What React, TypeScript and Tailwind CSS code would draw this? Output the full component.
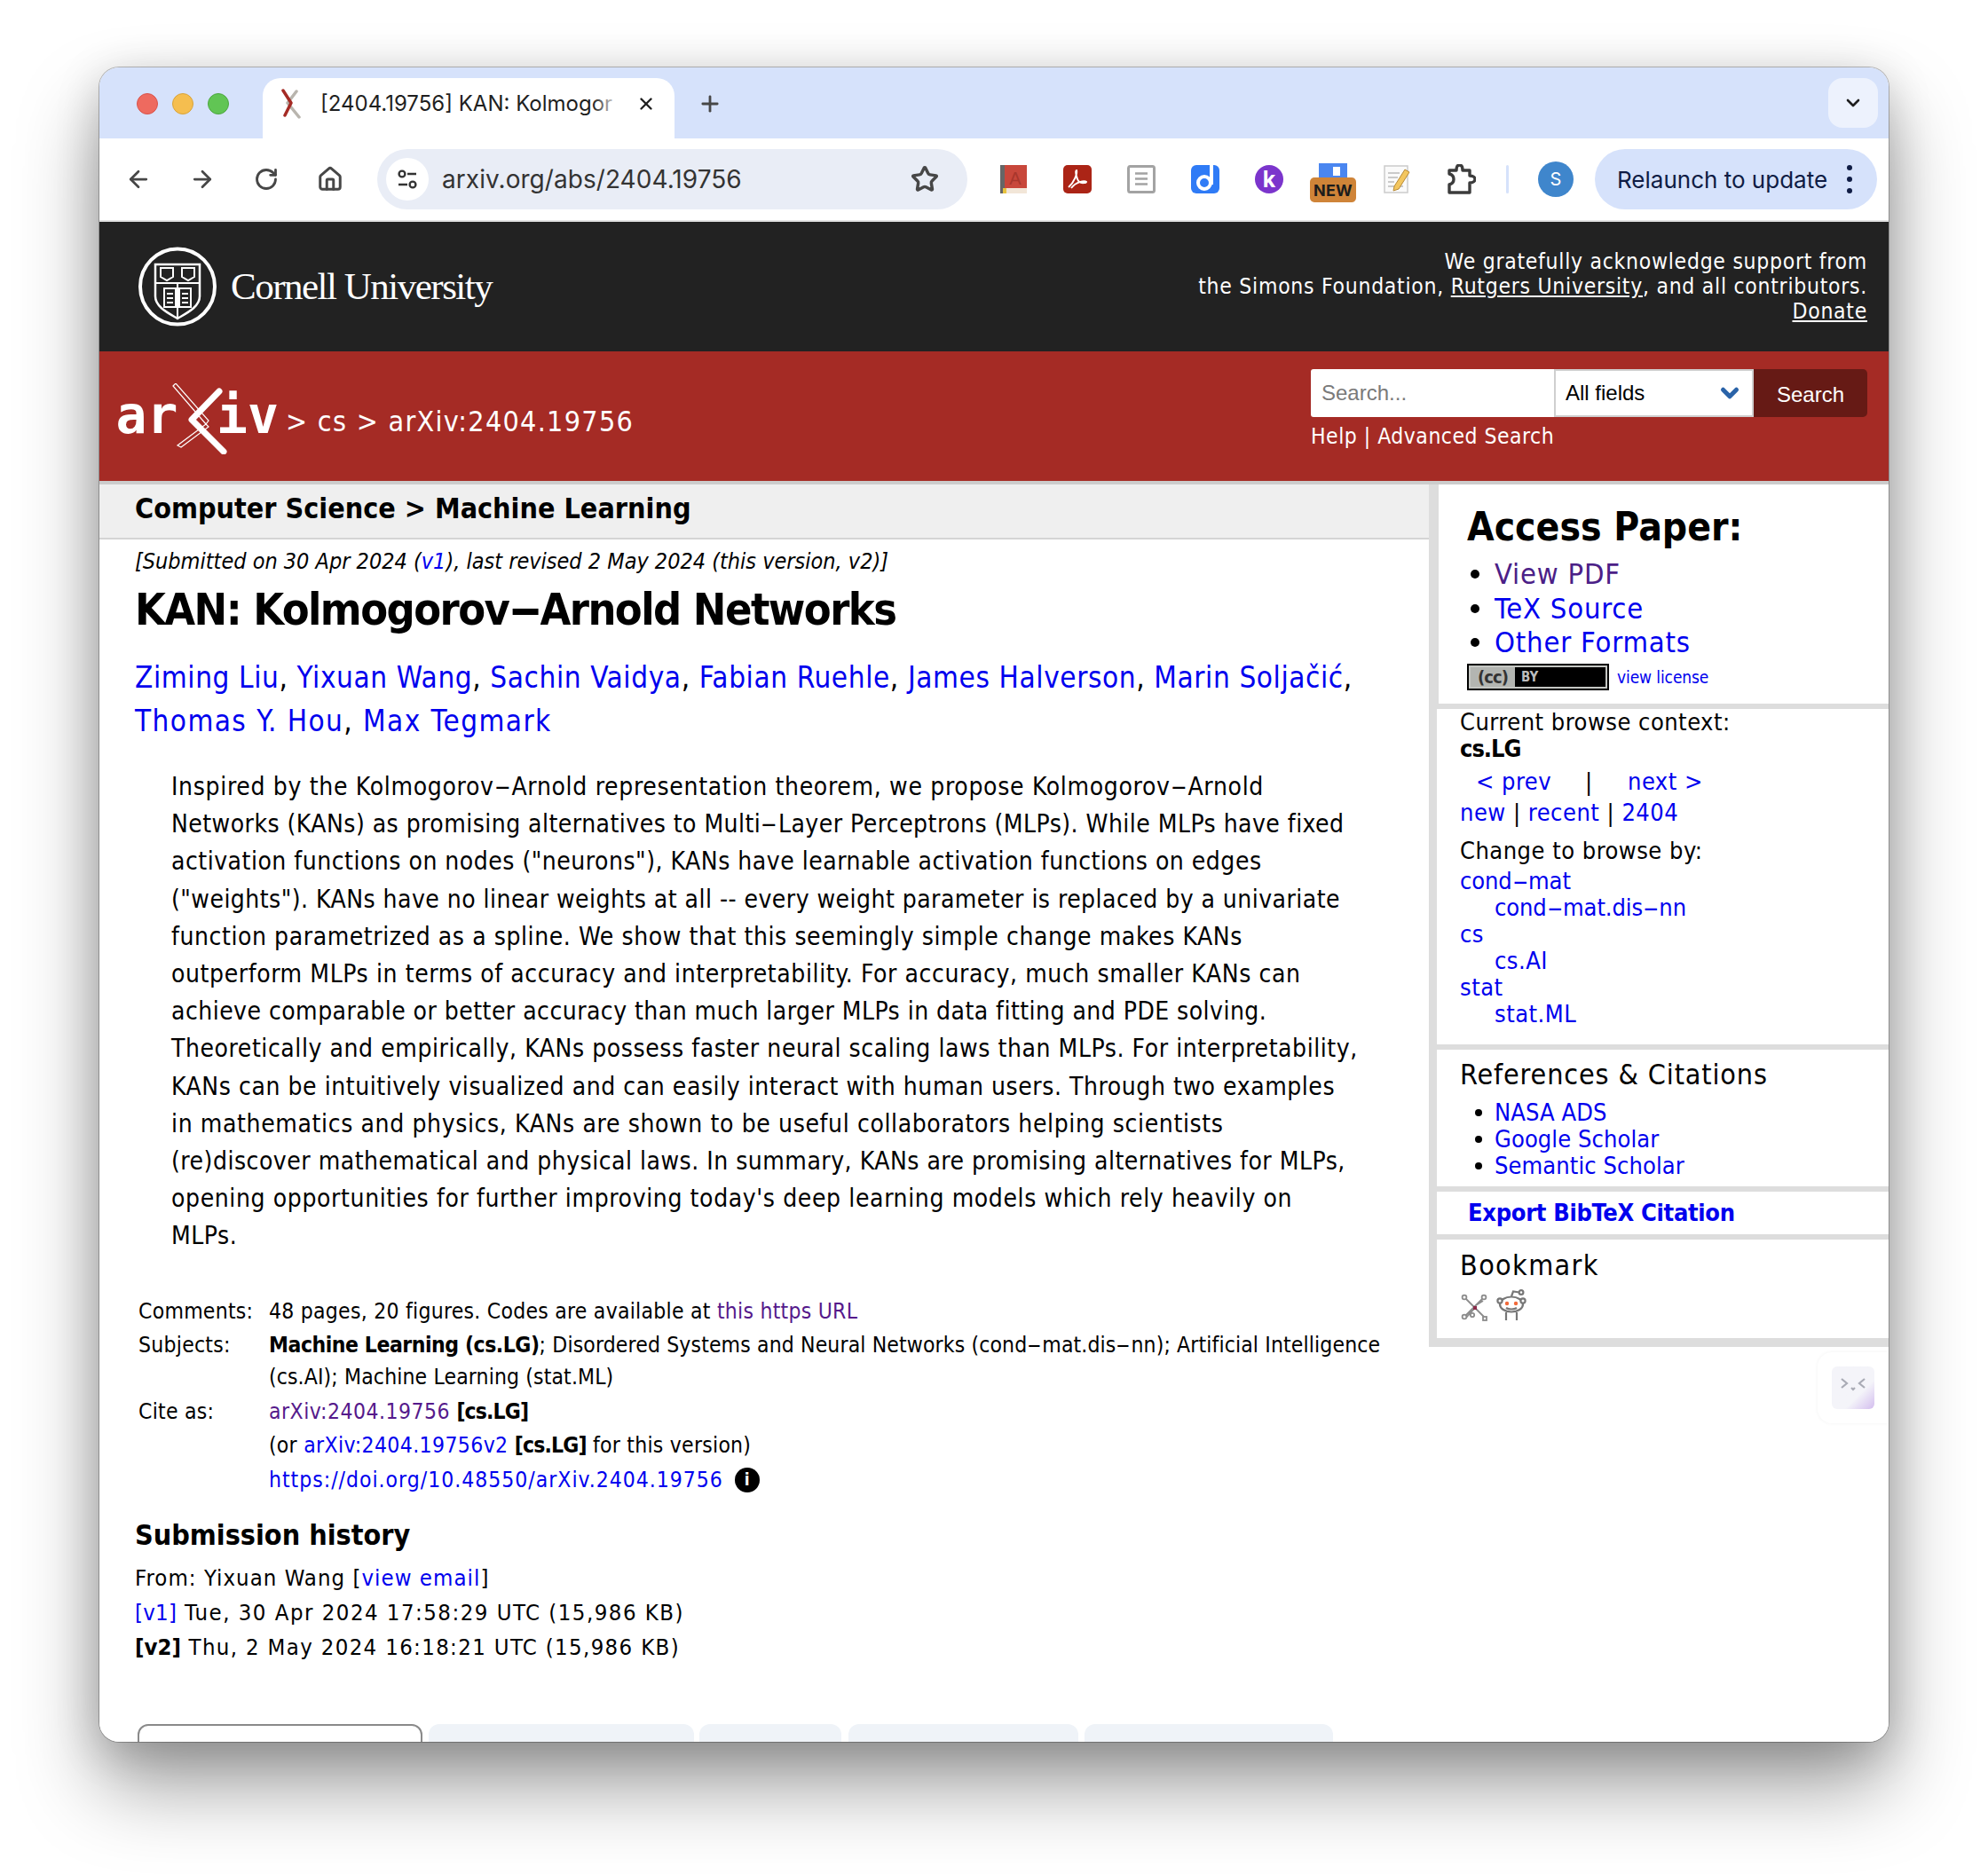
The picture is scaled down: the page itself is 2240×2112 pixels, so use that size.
import React from "react";
import { ArrowLeft, ArrowRight, RotateCw, Star, Plus, X, ChevronDown, House } from "lucide-react";

const abstractLines = [
  { text: "Inspired by the Kolmogorov-Arnold representation theorem, we propose Kolmogorov-Arnold", fit: "tracking-[0.68px]" },
  { text: "Networks (KANs) as promising alternatives to Multi-Layer Perceptrons (MLPs). While MLPs have fixed", fit: "tracking-[0.47px]" },
  { text: 'activation functions on nodes ("neurons"), KANs have learnable activation functions on edges', fit: "tracking-[0.51px]" },
  { text: '("weights"). KANs have no linear weights at all -- every weight parameter is replaced by a univariate', fit: "tracking-[0.47px]" },
  { text: "function parametrized as a spline. We show that this seemingly simple change makes KANs", fit: "tracking-[0.58px]" },
  { text: "outperform MLPs in terms of accuracy and interpretability. For accuracy, much smaller KANs can", fit: "tracking-[0.6px]" },
  { text: "achieve comparable or better accuracy than much larger MLPs in data fitting and PDE solving.", fit: "tracking-[0.47px]" },
  { text: "Theoretically and empirically, KANs possess faster neural scaling laws than MLPs. For interpretability,", fit: "tracking-[0.57px]" },
  { text: "KANs can be intuitively visualized and can easily interact with human users. Through two examples", fit: "tracking-[0.56px]" },
  { text: "in mathematics and physics, KANs are shown to be useful collaborators helping scientists", fit: "tracking-[0.63px]" },
  { text: "(re)discover mathematical and physical laws. In summary, KANs are promising alternatives for MLPs,", fit: "tracking-[0.51px]" },
  { text: "opening opportunities for further improving today's deep learning models which rely heavily on", fit: "tracking-[0.62px]" },
  { text: "MLPs.", fit: "tracking-[0.53px]" },
];

function Link({ children, className = "" }: { children: React.ReactNode; className?: string }) {
  return <a className={"text-[#0000ee] " + className}>{children}</a>;
}

function Hy({ text }: { text: string }) {
  const parts = text.split(/(?<!-)-(?!-)/);
  return (
    <>
      {parts.map((part, i) => (
        <React.Fragment key={i}>
          {i > 0 && <span className="inline-block scale-x-[2.1] px-[0.18em]">-</span>}
          {part}
        </React.Fragment>
      ))}
    </>
  );
}

function ArxivLogo() {
  return (
    <svg width="186" height="80" viewBox="0 0 186 80" className="-mr-[6px] shrink-0">
      <text x="-0.5" y="56" fill="#fff" fontFamily="'DejaVu Sans Mono', monospace" fontWeight="700" fontSize="58">ar</text>
      <text x="113" y="56" fill="#fff" fontFamily="'DejaVu Sans Mono', monospace" fontWeight="700" fontSize="58">iv</text>
      <path d="M116 9 L85 41 L121 77" fill="none" stroke="#fff" strokeWidth="7" strokeLinecap="round" strokeLinejoin="round" />
      <path d="M64 3 L67 0 L104 42 L101 46 Z M101 46 L104 49 L73 72 L69 70 Z" fill="none" stroke="#fff" strokeWidth="1.2" />
    </svg>
  );
}

function CornellSeal() {
  return (
    <svg width="90" height="90" viewBox="0 0 90 90" className="shrink-0" fill="none" stroke="#fff">
      <ellipse cx="45" cy="45" rx="42" ry="42.5" strokeWidth="4" />
      <path d="M20 20 H70 V56 C70 68 55 75 45 81 C35 75 20 68 20 56 Z" strokeWidth="2.5" />
      <path d="M20 41 H70 M45 41 V81" strokeWidth="2" />
      <path d="M26 24 H40 V34 L33 38 L26 34 Z M50 24 H64 V34 L57 38 L50 34 Z" strokeWidth="2" />
      <path d="M30 47 H43 V68 H30 Z M47 47 H60 V68 H47 Z" strokeWidth="2" />
      <path d="M33 53 H40 M33 58 H40 M33 63 H40 M50 53 H57 M50 58 H57 M50 63 H57" strokeWidth="1.8" />
    </svg>
  );
}

function Favicon() {
  return (
    <svg width="24" height="34" viewBox="0 0 24 34" className="shrink-0">
      <path d="M18 3 L8 16 L21 32" stroke="#b9b5ae" strokeWidth="3.5" strokeLinecap="round" strokeLinejoin="round" fill="none" />
      <path d="M3 2 L12 16 L5 30" stroke="#a52b25" strokeWidth="3.5" strokeLinecap="round" strokeLinejoin="round" fill="none" />
    </svg>
  );
}

function NavButton({ children }: { children: React.ReactNode }) {
  return <div className="flex h-[72px] w-[72px] shrink-0 items-center justify-center text-[#474747]">{children}</div>;
}

function ExtSlot({ children }: { children: React.ReactNode }) {
  return <div className="relative flex h-[72px] w-[72px] shrink-0 items-center justify-center">{children}</div>;
}

function BrowserChrome() {
  return (
    <div className="[font-family:Inter,'Liberation_Sans',sans-serif]">
      <div className="flex h-[80px] items-end bg-[#d6e2fb]">
        <div className="flex h-[68px] w-[184px] shrink-0 items-start gap-[16px] pl-[42px] pt-[17px]">
          <span className="h-[24px] w-[24px] rounded-full border border-[#d9534a] bg-[#ee6a5f]" />
          <span className="h-[24px] w-[24px] rounded-full border border-[#d8a33a] bg-[#f5be4f]" />
          <span className="h-[24px] w-[24px] rounded-full border border-[#4da63f] bg-[#61c554]" />
        </div>
        <div className="relative flex h-[68px] w-[464px] shrink-0 items-center rounded-t-[20px] bg-white pb-[10px] pl-[20px]">
          <Favicon />
          <span className="ml-[21px] text-[24px] whitespace-nowrap text-[#1f1f1f]">[2404.19756] KAN: Kolmogor</span>
          <div className="absolute top-0 left-[372px] h-full w-[30px] bg-gradient-to-r from-transparent to-white" />
          <X size={22} strokeWidth={2.6} className="absolute top-[18px] left-[421px] text-[#1f1f1f]" />
        </div>
        <div className="flex h-[68px] w-[80px] items-center justify-center pb-[10px] text-[#474747]">
          <Plus size={28} strokeWidth={2.4} />
        </div>
        <div className="flex-1" />
        <div className="mr-[12px] mb-[12px] flex h-[56px] w-[56px] items-center justify-center rounded-[16px] bg-[#edf2fd] text-[#1f1f1f]">
          <ChevronDown size={24} strokeWidth={2.6} />
        </div>
      </div>
      <div className="flex h-[92px] items-center bg-white pl-[8px]">
        <NavButton><ArrowLeft size={30} strokeWidth={2.2} /></NavButton>
        <NavButton><ArrowRight size={30} strokeWidth={2.2} /></NavButton>
        <NavButton><RotateCw size={28} strokeWidth={2.4} /></NavButton>
        <NavButton><House size={30} strokeWidth={2.4} /></NavButton>
        <div className="ml-[17px] flex h-[68px] w-[665px] shrink-0 items-center rounded-full bg-[#e9edf6] pl-[10px]">
          <div className="flex h-[48px] w-[48px] items-center justify-center rounded-full bg-white">
            <svg width="26" height="26" viewBox="0 0 26 26" fill="none" stroke="#333" strokeWidth="2.4">
              <circle cx="7" cy="7" r="3.4" />
              <path d="M13 7 H23 M3 19 H13" />
              <circle cx="19" cy="19" r="3.4" />
            </svg>
          </div>
          <span className="ml-[15px] text-[28px] tracking-[0.05px] text-[#333]">arxiv.org/abs/2404.19756</span>
          <div className="flex-1" />
          <Star size={32} strokeWidth={2.6} className="mr-[32px] text-[#474747]" />
        </div>
        <div className="ml-[16px] flex">
          <ExtSlot>
            <svg width="30" height="32" viewBox="0 0 30 32">
              <rect x="0" y="0" width="30" height="28" fill="#c8473b" />
              <rect x="0" y="0" width="5" height="32" fill="#666" />
              <rect x="5" y="26" width="25" height="6" fill="#f2e6d8" />
              <rect x="3" y="26" width="4" height="6" fill="#e8c33e" />
              <text x="17" y="22" textAnchor="middle" fontSize="20" fill="#a9362c" fontFamily="'Liberation Sans', sans-serif">A</text>
            </svg>
          </ExtSlot>
          <ExtSlot>
            <svg width="32" height="32" viewBox="0 0 32 32">
              <rect width="32" height="32" rx="5" fill="#ab2416" />
              <path d="M6 25 C12 20 16 10 15 6 C13 6 15 16 18 19 C21 21 26 20 26 19 C24 17 14 19 9 26" fill="none" stroke="#fff" strokeWidth="2" />
            </svg>
          </ExtSlot>
          <ExtSlot>
            <svg width="32" height="32" viewBox="0 0 32 32" fill="none">
              <rect x="1.5" y="1.5" width="29" height="29" rx="2" stroke="#a3a3a3" strokeWidth="3" />
              <path d="M9 9.5 H23 M9 15.5 H23 M9 21.5 H23" stroke="#a3a3a3" strokeWidth="2.6" />
            </svg>
          </ExtSlot>
          <ExtSlot>
            <svg width="32" height="32" viewBox="0 0 32 32">
              <rect width="32" height="32" rx="6" fill="#2f7bf6" />
              <rect x="21" y="0" width="4" height="22" fill="#fff" />
              <circle cx="15" cy="20" r="7" fill="none" stroke="#fff" strokeWidth="4" />
            </svg>
          </ExtSlot>
          <ExtSlot>
            <div className="flex h-[32px] w-[32px] items-center justify-center rounded-full bg-[#7b35cc] text-[25px] leading-none font-bold text-white">k</div>
          </ExtSlot>
          <ExtSlot>
            <div className="absolute top-[18px] left-[20px] h-[24px] w-[32px] bg-[#4a86f0]">
              <div className="mt-[4px] ml-[16px] h-[10px] w-[8px] bg-white" />
            </div>
            <div className="absolute top-[34px] left-[10px] flex h-[28px] w-[52px] items-center justify-center rounded-[5px] bg-[#cf8438] text-[18px] font-bold tracking-[0.2px] text-[#1c1c1c]">NEW</div>
          </ExtSlot>
          <ExtSlot>
            <svg width="30" height="32" viewBox="0 0 30 32">
              <rect x="1" y="1" width="26" height="30" fill="#fafafa" stroke="#ccc" strokeWidth="1.5" />
              <path d="M5 9 H18 M5 14 H16 M5 19 H12 M5 24 H22" stroke="#bbb" strokeWidth="1.6" />
              <path d="M12 24 L24 5 L29 8 L17 27 L11 29 Z" fill="#f3c65f" stroke="#b88a36" strokeWidth="1" />
            </svg>
          </ExtSlot>
          <ExtSlot>
            <svg width="34" height="34" viewBox="0 0 34 34" fill="none">
              <path d="M4 7 H12 C12 3 13 1 15.5 1 C18 1 19 3 19 7 H27 V13 C31 13 33 15 33 17 C33 19 31 21 27 21 V32 H4 V23 C8 22 9 20 9 17 C9 14 8 12 4 11 Z" stroke="#3c3c3c" strokeWidth="3.4" strokeLinejoin="round" />
            </svg>
          </ExtSlot>
        </div>
        <div className="ml-[15px] h-[32px] w-[3px] shrink-0 rounded bg-[#d6e2fb]" />
        <div className="ml-[33px] flex h-[40px] w-[40px] shrink-0 items-center justify-center rounded-full bg-[#3f86cc] text-[20px] text-white">S</div>
        <div className="ml-[24px] flex h-[68px] w-[318px] shrink-0 items-center rounded-full bg-[#d6e2fb] pl-[25px]">
          <span className="text-[26px] whitespace-nowrap text-[#0f1c44]">Relaunch to update</span>
          <div className="ml-[22px] flex flex-col gap-[7px]">
            <span className="h-[6px] w-[6px] rounded-full bg-[#0f1c44]" />
            <span className="h-[6px] w-[6px] rounded-full bg-[#0f1c44]" />
            <span className="h-[6px] w-[6px] rounded-full bg-[#0f1c44]" />
          </div>
        </div>
      </div>
      <div className="h-[2px] bg-[#e3e3e3]" />
    </div>
  );
}

function SiteHeader() {
  return (
    <div className="[font-family:'DejaVu_Sans',sans-serif] [font-stretch:condensed]">
      <div className="flex h-[146px] items-center justify-between bg-[#222222] pr-[24px] pl-[43px] text-white">
        <div className="flex items-center">
          <CornellSeal />
          <span className="ml-[15px] text-[43px] tracking-[-1.5px] [font-family:'Liberation_Serif',serif]">Cornell University</span>
        </div>
        <div className="text-right text-[24.5px] leading-[28px] tracking-[0.73px]">
          <div>We gratefully acknowledge support from</div>
          <div>the Simons Foundation, <span className="underline">Rutgers University</span>, and all contributors.</div>
          <div className="underline">Donate</div>
        </div>
      </div>
      <div className="flex h-[146px] items-center justify-between bg-[#a52b25] pr-[24px] pl-[19px] text-white">
        <div className="flex items-center pt-[7px]">
          <div className="-mt-[2px]"><ArxivLogo /></div>
          <span className="mt-[4px] ml-[11px] text-[32px] tracking-[1.28px] whitespace-pre">{"> cs > arXiv:2404.19756"}</span>
        </div>
        <div className="w-[627px] pb-[12px]">
          <div className="flex h-[54px]">
            <input
              readOnly
              placeholder="Search..."
              className="h-full w-[274px] rounded-l-[3px] bg-white px-[12px] text-[24px] outline-none placeholder:text-[#7a7a7a] [font-family:'Liberation_Sans',sans-serif]"
            />
            <div className="flex h-full w-[225px] items-center justify-between border-2 border-[#cfcfcf] bg-white pr-[10px] pl-[11px] text-[24px] text-black [font-family:'Liberation_Sans',sans-serif]">
              <span>All fields</span>
              <ChevronDown size={30} strokeWidth={4} className="text-[#2a63a8]" />
            </div>
            <div className="flex h-full w-[128px] items-center justify-center rounded-r-[5px] bg-[#661a15] pt-[4px] text-[24px] text-white [font-family:'Liberation_Sans',sans-serif]">Search</div>
          </div>
          <div className="mt-[4px] text-[24.5px] leading-[36px] tracking-[0.5px]">Help | Advanced Search</div>
        </div>
      </div>
      <div className="h-[4px] bg-[#cccccc]" />
    </div>
  );
}

function Bullet({ className }: { className: string }) {
  return <span className={"rounded-full bg-black " + className} />;
}

function Bold({ children }: { children: React.ReactNode }) {
  return <b className="tracking-[-0.85px]">{children}</b>;
}

function MainColumn() {
  return (
    <div className="w-[1498px] shrink-0 text-black">
      <div className="h-[62px] border-b-2 border-[#d4d4d4] bg-[#efefef] pl-[40px] text-[32px] leading-[54px] font-bold">
        Computer Science &gt; Machine Learning
      </div>
      <div className="pr-[40px] pl-[40px]">
        <div className="mt-[7px] text-[25px] leading-[36px] italic">
          [Submitted on 30 Apr 2024 (<Link>v1</Link>), last revised 2 May 2024 (this version, v2)]
        </div>
        <h1 className="mt-[6px] text-[50px] leading-[60px] font-bold tracking-[-1.55px]"><Hy text="KAN: Kolmogorov-Arnold Networks" /></h1>
        <div className="mt-[22px] text-[33px] leading-[49px] tracking-[0.6px]">
          <div>
            <Link>Ziming Liu</Link>, <Link>Yixuan Wang</Link>, <Link>Sachin Vaidya</Link>, <Link>Fabian Ruehle</Link>, <Link>James Halverson</Link>, <Link>Marin Soljačić</Link>,
          </div>
          <div className="tracking-[1.43px]">
            <Link>Thomas Y. Hou</Link>, <Link>Max Tegmark</Link>
          </div>
        </div>
        <div className="mt-[29px] pl-[41px] text-[28px] leading-[42.2px] whitespace-nowrap">
          {abstractLines.map((line) => (
            <div key={line.text} className={line.fit}><Hy text={line.text} /></div>
          ))}
        </div>
        <div className="mt-[45px] ml-[4px] grid grid-cols-[147px_1fr] gap-y-[2.5px] text-[24.5px] leading-[36px] tracking-[0.26px] whitespace-nowrap">
          <div>Comments:</div>
          <div>48 pages, 20 figures. Codes are available at <a className="text-[#551a8b]">this https URL</a></div>
          <div>Subjects:</div>
          <div className="tracking-[0.14px]">
            <b className="tracking-[-0.45px]">Machine Learning (cs.LG)</b>; Disordered Systems and Neural Networks (<Hy text="cond-mat.dis-nn" />); Artificial Intelligence
            <br />
            (cs.AI); Machine Learning (stat.ML)
          </div>
          <div>Cite as:</div>
          <div><a className="tracking-[0.5px] text-[#551a8b]">arXiv:2404.19756</a> <Bold>[cs.LG]</Bold></div>
          <div />
          <div>(or <Link className="tracking-[0.4px]">arXiv:2404.19756v2</Link> <Bold>[cs.LG]</Bold> for this version)</div>
          <div />
          <div className="flex items-center">
            <Link className="tracking-[1px]">https://doi.org/10.48550/arXiv.2404.19756</Link>
            <span className="ml-[13px] flex h-[28px] w-[28px] items-center justify-center rounded-full bg-black text-[19px] leading-none font-bold text-white">i</span>
          </div>
        </div>
        <h2 className="mt-[22px] text-[32px] leading-[44px] font-bold">Submission history</h2>
        <div className="mt-[7px] text-[25.5px] leading-[39px] whitespace-nowrap">
          <div className="tracking-[1.05px]">From: Yixuan Wang [<Link>view email</Link>]</div>
          <div className="tracking-[1.5px]"><Link className="tracking-[0.26px]">[v1]</Link> Tue, 30 Apr 2024 17:58:29 UTC (15,986 KB)</div>
          <div className="tracking-[1.36px]"><b className="tracking-normal">[v2]</b> Thu, 2 May 2024 16:18:21 UTC (15,986 KB)</div>
        </div>
      </div>
      <div className="mt-[67.5px] flex h-[30px] items-start pl-[43px]">
        <div className="mr-[7px] h-[30px] w-[321px] rounded-t-[12px] border-2 border-[#8a8a8a] bg-white" />
        <div className="mr-[6px] h-[30px] w-[299px] rounded-t-[12px] bg-[#eff3f8]" />
        <div className="mr-[8px] h-[30px] w-[160px] rounded-t-[12px] bg-[#eff3f8]" />
        <div className="mr-[7px] h-[30px] w-[259px] rounded-t-[12px] bg-[#eff3f8]" />
        <div className="h-[30px] w-[280px] rounded-t-[12px] bg-[#eff3f8]" />
      </div>
    </div>
  );
}

function Sidebar() {
  return (
    <div className="relative flex-1 text-black">
      <div className="flex flex-col gap-[6px] bg-[#dddddd] pb-[10px] pl-[9px]">
        <div className="border-l-2 border-[#dddddd] bg-white pt-[18px] pb-[15px] pl-[32px]">
          <h2 className="text-[44px] leading-[60px] font-bold">Access Paper:</h2>
          <ul className="mt-[4px] text-[32.5px] leading-[38.5px] tracking-[0.8px]">
            <li className="flex items-center"><Bullet className="ml-[4px] h-[10px] w-[10px]" /><a className="ml-[17px] text-[#4b2087]">View PDF</a></li>
            <li className="flex items-center"><Bullet className="ml-[4px] h-[10px] w-[10px]" /><Link className="ml-[17px]">TeX Source</Link></li>
            <li className="flex items-center"><Bullet className="ml-[4px] h-[10px] w-[10px]" /><Link className="ml-[17px]">Other Formats</Link></li>
          </ul>
          <div className="mt-[4.5px] flex h-[30px] items-center">
            <div className="flex h-[30px] w-[160px] items-center border-2 border-black bg-[#c5c7c3] p-[2px]">
              <div className="flex h-full flex-1 items-center bg-black">
                <div className="flex h-full w-[50px] items-center justify-center bg-[#b3b5b1] text-[20px] leading-none font-bold tracking-[-1px] text-[#333]">(cc)</div>
                <span className="ml-[7px] text-[15px] leading-none font-bold text-[#bcbcbc]">BY</span>
              </div>
            </div>
            <Link className="ml-[9px] text-[19px] tracking-[-0.1px]">view license</Link>
          </div>
        </div>
        <div className="bg-white pb-[19px] pl-[26px] text-[27px] tracking-[0.49px]">
          <div className="leading-[30px]">Current browse context:</div>
          <div className="leading-[30px] font-bold tracking-[-1px]">cs.LG</div>
          <div className="mt-[4px] flex leading-[36px]">
            <Link className="ml-[18px] w-[123px]">&lt; prev</Link>
            <span className="w-[48px]">|</span>
            <Link>next &gt;</Link>
          </div>
          <div className="leading-[34px]">
            <Link>new</Link> | <Link>recent</Link> | <Link>2404</Link>
          </div>
          <div className="mt-[9px] leading-[34px]">Change to browse by:</div>
          <div className="mt-[2px] flex flex-col leading-[30px]">
            <Link className="tracking-[-0.1px]"><Hy text="cond-mat" /></Link>
            <Link className="ml-[39px] tracking-[-0.1px]"><Hy text="cond-mat.dis-nn" /></Link>
            <Link>cs</Link>
            <Link className="ml-[39px]">cs.AI</Link>
            <Link>stat</Link>
            <Link className="ml-[39px]">stat.ML</Link>
          </div>
        </div>
        <div className="bg-white pt-[6px] pb-[8px] pl-[26px]">
          <h3 className="text-[32px] leading-[44px] tracking-[0.87px]">References &amp; Citations</h3>
          <ul className="mt-[6px] text-[27px] leading-[30px] tracking-[0.1px]">
            <li className="flex items-center"><Bullet className="ml-[17px] h-[8px] w-[8px]" /><Link className="ml-[14px]">NASA ADS</Link></li>
            <li className="flex items-center"><Bullet className="ml-[17px] h-[8px] w-[8px]" /><Link className="ml-[14px]">Google Scholar</Link></li>
            <li className="flex items-center"><Bullet className="ml-[17px] h-[8px] w-[8px]" /><Link className="ml-[14px]">Semantic Scholar</Link></li>
          </ul>
        </div>
        <div className="bg-white pl-[35px] text-[27px] leading-[48px] font-bold tracking-[-0.3px]">
          <Link>Export BibTeX Citation</Link>
        </div>
        <div className="bg-white pt-[7px] pb-[19px] pl-[26px]">
          <h3 className="text-[32px] leading-[44px] tracking-[1.38px]">Bookmark</h3>
          <div className="mt-[5px] flex h-[36px] items-end gap-[8px]">
            <svg width="32" height="32" viewBox="0 0 32 32" fill="none" stroke="#8c8c8c" strokeWidth="1.8">
              <path d="M5 5 L27 27 M27 5 L5 27 M17 17 L7 28 M18 14 L26 9" />
              <circle cx="5" cy="5" r="2.4" fill="#fff" />
              <circle cx="27" cy="5" r="2.4" fill="#fff" />
              <circle cx="5" cy="27" r="2.4" fill="#fff" />
              <circle cx="14" cy="25" r="2.2" fill="#fff" />
              <rect x="26" y="27" width="4" height="4" fill="#fff" />
              <rect x="15" y="15" width="4" height="4" fill="#8a2a4a" stroke="none" />
            </svg>
            <svg width="36" height="36" viewBox="0 0 36 36" fill="none" stroke="#777" strokeWidth="2.2">
              <ellipse cx="18" cy="17" rx="13" ry="8.5" fill="#fff" />
              <circle cx="5" cy="13" r="2.6" fill="#fff" />
              <circle cx="31" cy="13" r="2.6" fill="#fff" />
              <circle cx="29" cy="3.5" r="2.4" fill="#fff" />
              <path d="M18 8 L20 2.5 L27 3.5 M12 26 V35 M24 26 V35 M12 21 C15 23 21 23 24 21" />
              <circle cx="13" cy="16" r="2.2" fill="#f26a3a" stroke="none" />
              <circle cx="23" cy="16" r="2.2" fill="#f26a3a" stroke="none" />
            </svg>
          </div>
        </div>
      </div>
      <div className="absolute top-[978px] right-0 flex h-[80px] w-[80px] items-center rounded-l-[16px] bg-white pl-[16px] shadow-[0_0_4px_rgba(0,0,0,0.05)]">
        <div className="flex h-[48px] w-[48px] items-start justify-center rounded-[6px] bg-gradient-to-br from-[#f4f4f9] from-65% to-[#d3bdee] pt-[12px]">
          <svg width="28" height="16" viewBox="0 0 28 16" fill="none" stroke="#a9abb5" strokeWidth="2.2">
            <path d="M1 2 L7 7 L1 12 M27 2 L21 7 L27 12 M12 12 L14 14 L16 12" />
          </svg>
        </div>
      </div>
    </div>
  );
}

export default function App() {
  return (
    <div className="h-[2112px] w-[2240px] overflow-hidden bg-white pt-[76px] pl-[112px]">
      <div className="h-[1887px] w-[2016px] overflow-hidden rounded-[22px] bg-white shadow-[0_0_0_1px_rgba(0,0,0,0.25),0_50px_90px_rgba(0,0,0,0.38),0_10px_50px_rgba(0,0,0,0.18)]">
        <BrowserChrome />
        <SiteHeader />
        <div className="flex bg-white [font-family:'DejaVu_Sans',sans-serif] [font-stretch:condensed]">
          <MainColumn />
          <Sidebar />
        </div>
      </div>
    </div>
  );
}
